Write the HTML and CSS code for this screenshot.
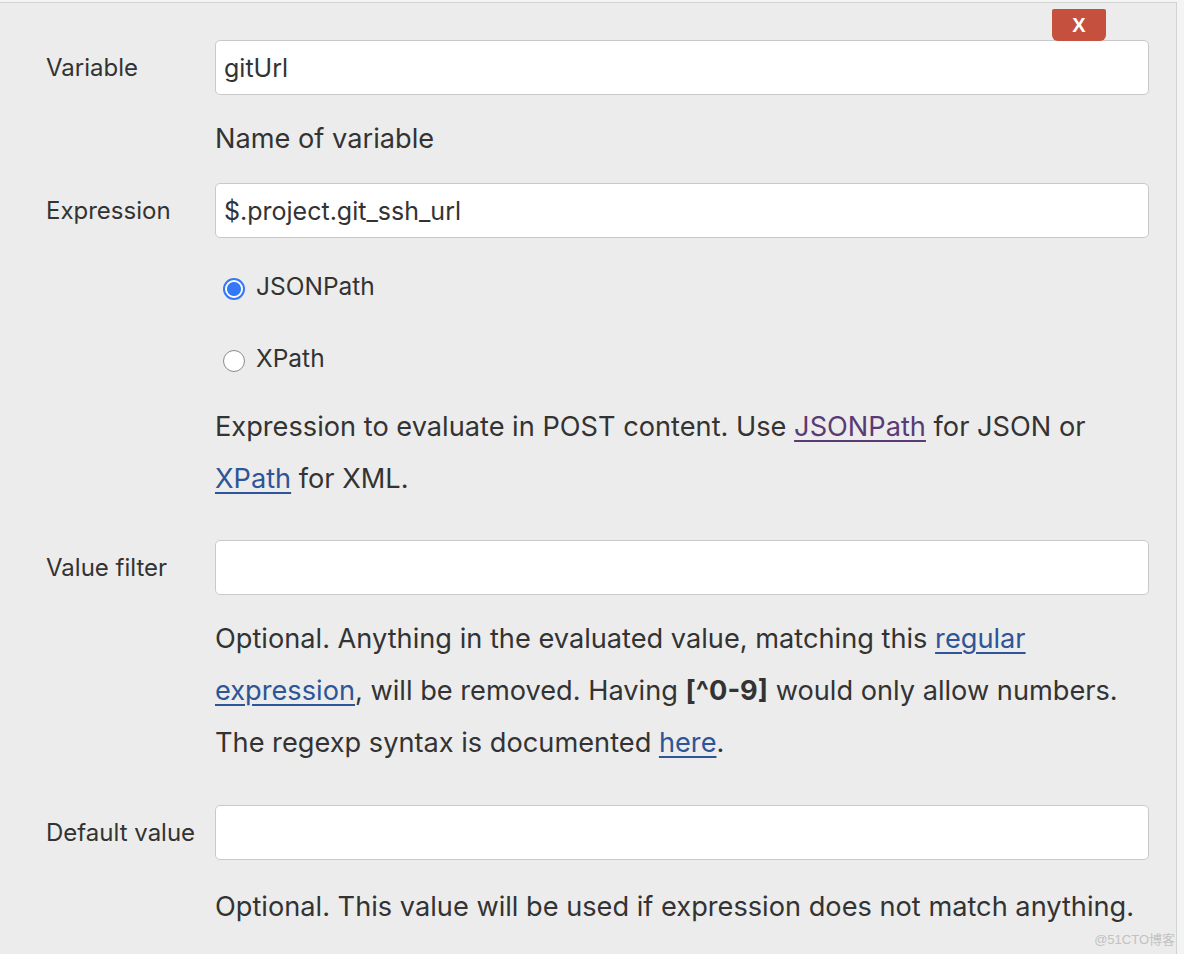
FILE: index.html
```html
<!DOCTYPE html>
<html>
<head>
<meta charset="utf-8">
<link rel="stylesheet" href="styles.css">
</head>
<body>
<div class="page">
  <button class="delete" type="button">X</button>
  <div class="row first">
    <label class="label">Variable</label>
    <div class="field"><input class="text" type="text" value="gitUrl"></div>
  </div>
  <div class="row help-row">
    <div></div>
    <div class="help">Name of variable</div>
  </div>
  <div class="row gap-input">
    <label class="label">Expression</label>
    <div class="field"><input class="text" type="text" value="$.project.git_ssh_url"></div>
  </div>
  <div class="row radios">
    <div></div>
    <div class="radio-list">
      <label class="radio"><input type="radio" name="t" checked><span>JSONPath</span></label>
      <label class="radio"><input type="radio" name="t"><span>XPath</span></label>
    </div>
  </div>
  <div class="row help-row help-after-radio">
    <div></div>
    <div class="help">Expression to evaluate in POST content. Use <a class="visited" href="#">JSONPath</a> for JSON or <a href="#">XPath</a> for XML.</div>
  </div>
  <div class="row gap-filter">
    <label class="label">Value filter</label>
    <div class="field"><input class="text" type="text" value=""></div>
  </div>
  <div class="row help-row">
    <div></div>
    <div class="help">Optional. Anything in the evaluated value, matching this <a href="#">regular expression</a>, will be removed. Having <b>[^0-9]</b> would only allow numbers. The regexp syntax is documented <a href="#">here</a>.</div>
  </div>
  <div class="row gap-default">
    <label class="label">Default value</label>
    <div class="field"><input class="text" type="text" value=""></div>
  </div>
  <div class="row help-row help-last">
    <div></div>
    <div class="help">Optional. This value will be used if expression does not match anything.</div>
  </div>
  <div class="watermark">@51CTO博客</div>
</div>
</body>
</html>
```

FILE: styles.css
```css
html, body {
  margin: 0;
  padding: 0;
}
body {
  background: #f4f4f4;
  font-family: Inter, "Liberation Sans", "Noto Sans CJK SC", sans-serif;
  color: #333;
}
.page {
  position: relative;
  margin-top: 2px;
  width: 1176px;
  height: 951px;
  background: #ececec;
  border-top: 1px solid #d3d3d3;
  border-right: 1px solid #d3d3d3;
}
.delete {
  position: absolute;
  top: 6px;
  left: 1052px;
  width: 54px;
  height: 32px;
  border: none;
  border-radius: 2px 2px 6px 6px;
  background: #c5503e;
  color: #fff;
  font-family: "Liberation Sans", sans-serif;
  font-weight: bold;
  font-size: 20px;
  line-height: 32px;
  padding: 0;
  z-index: 2;
}
.row {
  display: grid;
  grid-template-columns: 169px 934px;
  padding-left: 46px;
  align-items: center;
}
.first { margin-top: 37px; }
.gap-input { margin-top: 18px; }
.gap-filter { margin-top: 35px; }
.gap-default { margin-top: 36px; }
.help-row { margin-top: 18px; }
.help-after-radio { margin-top: 17px; }
.help-last { margin-top: 21px; }
.label {
  font-size: 24px;
  color: #333;
}
.text {
  box-sizing: border-box;
  width: 934px;
  height: 55px;
  border: 1px solid #c9c9c9;
  border-radius: 5px;
  background: #fff;
  font-family: inherit;
  font-size: 25px;
  color: #333;
  padding: 0 8px;
  outline: none;
}
.help {
  font-size: 27.2px;
  line-height: 52px;
  color: #333;
}
.help a {
  color: #2d5597;
  text-decoration: underline;
  text-underline-offset: 4px;
  text-decoration-thickness: 1.5px;
}
.help a.visited { color: #5a3b73; }
.help b { font-weight: 700; }
.radios { margin-top: 22px; }
.radio-list {
  display: flex;
  flex-direction: column;
  gap: 20px;
}
.radio {
  display: flex;
  align-items: center;
  height: 52px;
  font-size: 24.5px;
  padding-left: 8px;
}
.radio input {
  appearance: none;
  -webkit-appearance: none;
  margin: 5px 11px 0 0;
  width: 22px;
  height: 22px;
  border-radius: 50%;
  border: 1.5px solid #8b8b8b;
  background: #fff;
  box-sizing: border-box;
}
.radio input:checked {
  border: 2px solid #3478f6;
  background: radial-gradient(circle, #3478f6 0 6.5px, #fff 7.5px);
}
.watermark {
  position: absolute;
  right: 1px;
  bottom: 6px;
  font-size: 13px;
  color: #c2c2c2;
  font-family: "Liberation Sans", "Noto Sans CJK SC", sans-serif;
}
```
